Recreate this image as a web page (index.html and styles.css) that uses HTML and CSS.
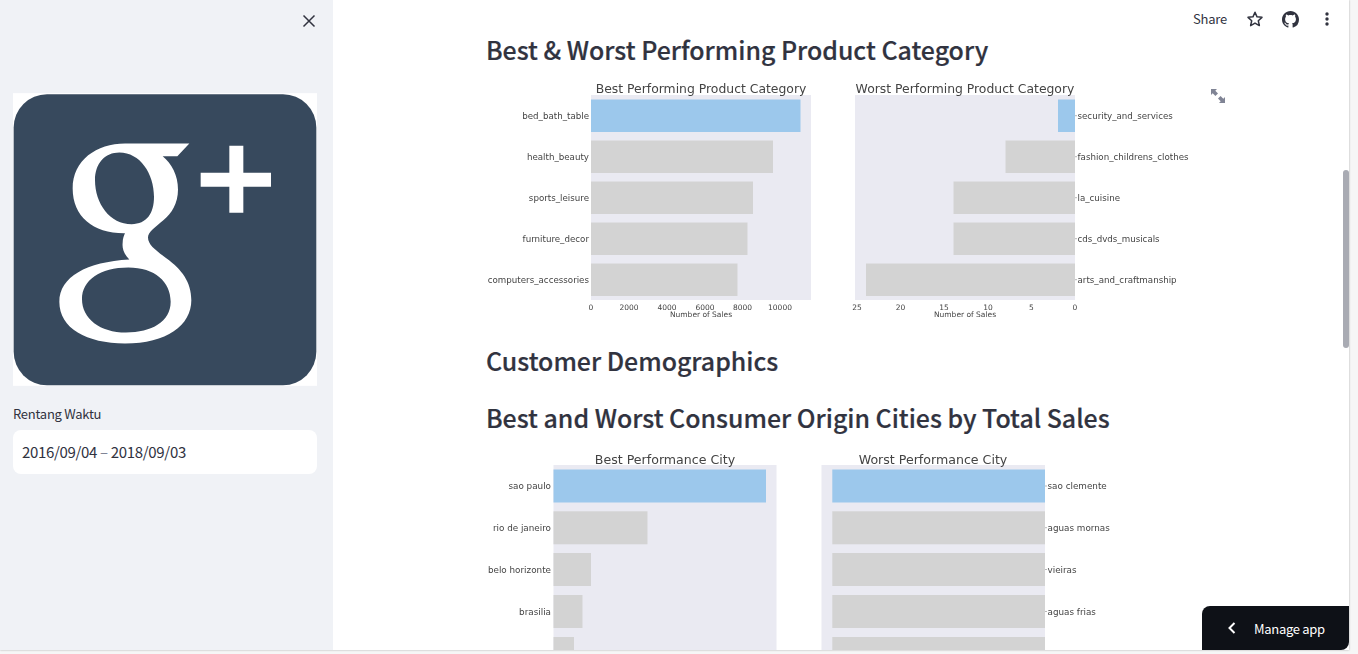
FILE: index.html
```html
<!DOCTYPE html>
<html>
<head lang="en">
    <meta charset="UTF-8">
    <title>Dashboard</title>
    <link rel="stylesheet" href="styles.css">
</head>
<body>
<div id="app">
    <div id="sidebar">
        <div class="side-head">
            <svg class="close-icon" viewBox="0 0 14 14"><path d="M1.500 1.500l11 11M12.500 1.500l-11 11"/></svg>
        </div>
        <svg class="logo" viewBox="39 279 912 878">
            <rect x="39" y="279" width="912" height="878" fill="#fff"/>
            <rect x="41" y="282" width="908" height="873" rx="100" fill="#37495d"/>
            <path fill="#fff" fill-rule="evenodd" d="M568 430L532 468H488C515 490 534 525 534 568C534 610 515 640 490 660C465 682 444 695 444 712C444 735 470 752 500 775C545 808 574 845 574 900C574 975 500 1030 375 1030C260 1030 178 985 178 905C178 830 260 785 388 778C372 762 366 745 368 728C368 715 372 705 375 699C280 700 218 650 218 565C218 480 290 430 375 430ZM358 457C315 457 285 490 285 540C285 610 330 672 395 672C440 672 462 640 462 590C462 520 420 457 358 457ZM385 802C300 802 246 840 246 897C246 955 300 997 378 997C455 997 512 965 512 905C512 845 465 802 385 802Z"/>
            <path fill="#fff" d="M688 437h42v81h83v42h-83v78h-42v-78h-86v-42h86z"/>
        </svg>
        <label class="date-label">Rentang Waktu</label>
        <div class="date-input">2016/09/04 <span class="dash">–</span> 2018/09/03</div>
    </div>

    <div id="main">
        <div id="content">
            <h2 class="first">Best &amp; Worst Performing Product Category</h2>
            <div class="chart-box">
                <svg class="chart" width="720" height="240" viewBox="486 80 720 240">
                    <rect class="panel" x="591" y="95" width="220" height="205"/>
                    <rect class="blue" x="591" y="99.500" width="209.500" height="32.500"/>
                    <rect class="grey" x="591" y="140.500" width="182" height="32.500"/>
                    <rect class="grey" x="591" y="181.500" width="162" height="32.500"/>
                    <rect class="grey" x="591" y="222.500" width="156.500" height="32.500"/>
                    <rect class="grey" x="591" y="263.500" width="146.500" height="32.500"/>
                    <text class="title" x="701" y="93">Best Performing Product Category</text>
                    <g class="lab end">
                        <text x="589" y="119">bed_bath_table</text>
                        <text x="589" y="160">health_beauty</text>
                        <text x="589" y="201">sports_leisure</text>
                        <text x="589" y="242">furniture_decor</text>
                        <text x="589" y="283">computers_accessories</text>
                    </g>
                    <g class="tick">
                        <text x="591" y="309.500">0</text>
                        <text x="629" y="309.500">2000</text>
                        <text x="667" y="309.500">4000</text>
                        <text x="705" y="309.500">6000</text>
                        <text x="742.500" y="309.500">8000</text>
                        <text x="780" y="309.500">10000</text>
                        <text x="701" y="317">Number of Sales</text>
                    </g>

                    <rect class="panel" x="855" y="95" width="220" height="205"/>
                    <rect class="blue" x="1058" y="99.500" width="17" height="32.500"/>
                    <rect class="grey" x="1005.500" y="140.500" width="69.500" height="32.500"/>
                    <rect class="grey" x="953.500" y="181.500" width="121.500" height="32.500"/>
                    <rect class="grey" x="953.500" y="222.500" width="121.500" height="32.500"/>
                    <rect class="grey" x="866" y="263.500" width="209" height="32.500"/>
                    <text class="title" x="965" y="93">Worst Performing Product Category</text>
                    <path class="tick-line" d="M1075 115.700h2M1075 156.700h2M1075 197.700h2M1075 238.700h2M1075 279.700h2"/>
                    <g class="lab">
                        <text x="1077.500" y="119">security_and_services</text>
                        <text x="1077.500" y="160">fashion_childrens_clothes</text>
                        <text x="1077.500" y="201">la_cuisine</text>
                        <text x="1077.500" y="242">cds_dvds_musicals</text>
                        <text x="1077.500" y="283">arts_and_craftmanship</text>
                    </g>
                    <g class="tick">
                        <text x="857" y="309.500">25</text>
                        <text x="900.500" y="309.500">20</text>
                        <text x="944" y="309.500">15</text>
                        <text x="988" y="309.500">10</text>
                        <text x="1031.500" y="309.500">5</text>
                        <text x="1075" y="309.500">0</text>
                        <text x="965" y="317">Number of Sales</text>
                    </g>
                </svg>
                <svg class="expand-icon" viewBox="0 0 14 14"><path d="M0 0h6L4.300 1.700 7 4.400 4.400 7 1.700 4.300 0 6zM14 14H8l1.700-1.700L7 9.600 9.600 7l2.700 2.700L14 8z"/></svg>
            </div>
            <h2 class="second">Customer Demographics</h2>
            <h2 class="third">Best and Worst Consumer Origin Cities by Total Sales</h2>
            <div class="chart-box low">
                <svg class="chart city" width="720" height="200" viewBox="486 450 720 200">
                    <rect class="panel" x="553.500" y="465" width="223" height="185"/>
                    <rect class="blue" x="553.500" y="469.500" width="212.500" height="33"/>
                    <rect class="grey" x="553.500" y="511.300" width="94" height="33"/>
                    <rect class="grey" x="553.500" y="553" width="37.500" height="33"/>
                    <rect class="grey" x="553.500" y="595" width="29" height="33"/>
                    <rect class="grey" x="553.500" y="637" width="20.500" height="13"/>
                    <text class="title" x="665" y="463.500">Best Performance City</text>
                    <g class="lab end">
                        <text x="551" y="489">sao paulo</text>
                        <text x="551" y="531">rio de janeiro</text>
                        <text x="551" y="573">belo horizonte</text>
                        <text x="551" y="615">brasilia</text>
                    </g>

                    <rect class="panel" x="821.500" y="465" width="223.500" height="185"/>
                    <rect class="blue" x="832.300" y="469.500" width="212.700" height="33"/>
                    <rect class="grey" x="832.300" y="511.300" width="212.700" height="33"/>
                    <rect class="grey" x="832.300" y="553" width="212.700" height="33"/>
                    <rect class="grey" x="832.300" y="595" width="212.700" height="33"/>
                    <rect class="grey" x="832.300" y="637" width="212.700" height="13"/>
                    <text class="title" x="933" y="463.500">Worst Performance City</text>
                    <path class="tick-line" d="M1045 486h2M1045 527.700h2M1045 569.500h2M1045 611.500h2"/>
                    <g class="lab">
                        <text x="1047.500" y="489">sao clemente</text>
                        <text x="1047.500" y="531">aguas mornas</text>
                        <text x="1047.500" y="573">vieiras</text>
                        <text x="1047.500" y="615">aguas frias</text>
                    </g>
                </svg>
            </div>
        </div>

        <div id="toolbar">
            <span class="share">Share</span>
            <svg class="star" viewBox="0 0 24 24"><path d="M12 3l2.700 6.100 6.600.7-4.900 4.500 1.400 6.500L12 17.500l-5.800 3.300 1.400-6.500-4.900-4.500 6.600-.7z"/></svg>
            <svg class="github" viewBox="0 0 16 16"><path d="M8 0C3.580 0 0 3.580 0 8c0 3.540 2.290 6.530 5.470 7.590.4.070.55-.17.55-.38 0-.19-.01-.82-.01-1.490-2.010.37-2.530-.49-2.690-.94-.09-.23-.48-.94-.82-1.130-.28-.15-.68-.52-.01-.53.63-.01 1.080.58 1.230.82.72 1.210 1.870.87 2.330.66.07-.52.28-.87.51-1.070-1.780-.2-3.640-.89-3.640-3.950 0-.87.31-1.590.82-2.150-.08-.2-.36-1.020.08-2.120 0 0 .67-.21 2.200.82.64-.18 1.320-.27 2-.27.68 0 1.360.09 2 .27 1.530-1.040 2.200-.82 2.200-.82.44 1.100.16 1.920.08 2.120.51.56.82 1.270.82 2.150 0 3.070-1.870 3.750-3.650 3.950.29.25.54.73.54 1.480 0 1.070-.01 1.930-.01 2.200 0 .21.15.46.55.38A8.013 8.013 0 0016 8c0-4.420-3.580-8-8-8z"/></svg>
            <svg class="kebab" viewBox="0 0 4 16"><circle cx="2" cy="3" r="1.700"/><circle cx="2" cy="8" r="1.700"/><circle cx="2" cy="13" r="1.700"/></svg>
        </div>
        <div id="scrollbar"></div>
        <div id="manage">
            <svg class="chevron" viewBox="0 0 10 14"><path d="M7.500 2L2.500 7l5 5"/></svg>
            <span>Manage app</span>
        </div>
    </div>
</div>
</body>
</html>
```

FILE: styles.css
```css
* {
    margin: 0;
    padding: 0;
    box-sizing: border-box;
}
html, body {
    height: 654px;
    overflow: hidden;
    background: #f6f6f6;
}
body {
    font-family: "Noto Sans CJK SC", "Noto Sans", sans-serif;
    color: #31333f;
}
#app {
    display: flex;
    width: 1349px;
    height: 650px;
    background: #fff;
    box-shadow: 0 0 2px rgba(0, 0, 0, .3);
}

/* sidebar */
#sidebar {
    width: 333px;
    flex: none;
    background: #f0f2f6;
    padding: 14px 16px 0 13px;
}
.side-head {
    display: flex;
    justify-content: flex-end;
    height: 79px;
    padding-right: 1px;
}
.close-icon {
    width: 14px;
    height: 14px;
    fill: none;
    stroke: #31333f;
    stroke-width: 1.500;
}
.logo {
    display: block;
    width: 304px;
    height: 293px;
}
.date-label {
    display: block;
    margin-top: 18px;
    font-size: 13px;
    letter-spacing: -.25px;
    line-height: 20px;
}
.date-input {
    width: 304px;
    height: 44px;
    margin-top: 6px;
    padding-left: 9px;
    background: #fff;
    border-radius: 8px;
    font-size: 15px;
    letter-spacing: -.33px;
    line-height: 44px;
}
.dash {
    color: #808495;
}

/* main area */
#main {
    flex: 1;
    position: relative;
    overflow: hidden;
}
#content {
    padding-left: 153px;
    width: 900px;
}
h2 {
    font-size: 24.900px;
    font-weight: 500;
    line-height: 40px;
    -webkit-text-stroke: .2px #31333f;
}
h2.first {
    margin-top: 29px;
}
h2.second {
    margin-top: 20px;
}
h2.third {
    margin-top: 17px;
}
.chart-box {
    position: relative;
    margin-top: 11px;
}
.chart-box.low {
    margin-top: 13px;
}
.chart {
    display: block;
    filter: blur(.5px);
    font-family: "DejaVu Sans", sans-serif;
}
.panel {
    fill: #eaeaf2;
}
.blue {
    fill: #9cc8ec;
}
.grey {
    fill: #d3d3d3;
}
.title {
    font-size: 12.400px;
    fill: #444;
    text-anchor: middle;
}
.city .title {
    font-size: 12.600px;
}
.lab text {
    font-size: 8.700px;
    fill: #444;
}
.city .lab text {
    font-size: 8.800px;
}
.lab.end text {
    text-anchor: end;
}
.tick text {
    font-size: 7.500px;
    fill: #444;
    text-anchor: middle;
}
.tick-line {
    stroke: #888;
    stroke-width: .6;
}
.expand-icon {
    position: absolute;
    left: 725px;
    top: 9px;
    width: 14px;
    height: 14px;
    fill: #808495;
}

/* floating stuff */
#toolbar {
    position: absolute;
    top: 8px;
    right: 20px;
    display: flex;
    align-items: center;
    height: 22px;
}
.share {
    font-size: 13px;
    letter-spacing: -.2px;
    padding-bottom: 2px;
    margin-right: 19px;
}
.star {
    width: 18px;
    height: 18px;
    fill: none;
    stroke: #31333f;
    stroke-width: 2;
    stroke-linejoin: round;
    margin-right: 18px;
}
.github {
    width: 17px;
    height: 17px;
    fill: #31333f;
    margin-right: 26px;
}
.kebab {
    width: 4px;
    height: 16px;
    fill: #31333f;
}
#scrollbar {
    position: absolute;
    right: 0;
    top: 170px;
    width: 6px;
    height: 178px;
    background: #a9abb3;
    border-radius: 3px;
}
#manage {
    position: absolute;
    right: 0;
    bottom: 0;
    display: flex;
    align-items: center;
    width: 147px;
    height: 44px;
    padding-left: 25px;
    background: #0e1117;
    color: #fff;
    border-radius: 8px 0 8px 0;
    font-size: 13px;
    letter-spacing: -.3px;
}
.chevron {
    width: 10px;
    height: 14px;
    fill: none;
    stroke: #fff;
    stroke-width: 2;
    margin-right: 17px;
}
```
